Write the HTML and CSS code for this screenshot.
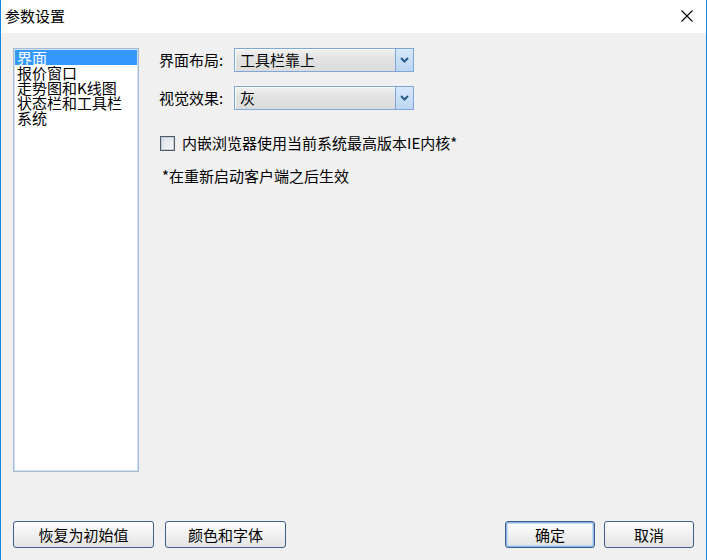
FILE: index.html
```html
<!DOCTYPE html>
<html lang="zh-CN">
<head>
<meta charset="utf-8">
<title>参数设置</title>
<link rel="stylesheet" href="styles.css">
</head>
<body>
<div class="window">
  <div class="titlebar">
    <span class="title">参数设置</span>
    <span class="close">
      <svg width="12" height="12" viewBox="0 0 12 12"><path d="M0.5 0.5 L11.5 11.5 M11.5 0.5 L0.5 11.5" stroke="#000" stroke-width="1.1" fill="none"/></svg>
    </span>
  </div>
  <div class="content">
    <div class="main">
      <ul class="listbox">
        <li class="item selected">界面</li>
        <li class="item">报价窗口</li>
        <li class="item">走势图和K线图</li>
        <li class="item">状态栏和工具栏</li>
        <li class="item">系统</li>
      </ul>
      <div class="panel">
        <div class="row">
          <span class="label">界面布局:</span>
          <div class="combo">
            <span class="combo-text">工具栏靠上</span>
            <span class="combo-btn"><svg width="9" height="6" viewBox="0 0 9 6"><path d="M1 1 L4.5 4.5 L8 1" stroke="#2b5a8c" stroke-width="2" fill="none"/></svg></span>
          </div>
        </div>
        <div class="row">
          <span class="label">视觉效果:</span>
          <div class="combo">
            <span class="combo-text">灰</span>
            <span class="combo-btn"><svg width="9" height="6" viewBox="0 0 9 6"><path d="M1 1 L4.5 4.5 L8 1" stroke="#2b5a8c" stroke-width="2" fill="none"/></svg></span>
          </div>
        </div>
        <label class="check-row">
          <span class="checkbox"></span>
          <span class="check-text">内嵌浏览器使用当前系统最高版本IE内核*</span>
        </label>
        <div class="note">*在重新启动客户端之后生效</div>
      </div>
    </div>
    <div class="footer">
      <div class="group left">
        <button class="btn w141">恢复为初始值</button>
        <button class="btn w121">颜色和字体</button>
      </div>
      <div class="group right">
        <button class="btn w90 default">确定</button>
        <button class="btn w90">取消</button>
      </div>
    </div>
  </div>
</div>
</body>
</html>
```
FILE: styles.css
```css
* { box-sizing: border-box; }
html, body {
  margin: 0;
  padding: 0;
  width: 707px;
  height: 560px;
  overflow: hidden;
  font-family: "Noto Sans CJK SC", "Liberation Sans", sans-serif;
  font-size: 15px;
  color: #000;
}
.window {
  width: 707px;
  height: 560px;
  border-left: 1px solid #1883d7;
  border-right: 1px solid #1883d7;
  display: flex;
  flex-direction: column;
  background: #f0f0f0;
}
.titlebar {
  height: 33px;
  background: #fff;
  display: flex;
  align-items: center;
  justify-content: space-between;
  padding: 0 13px 1px 4px;
}
.title {
  font-size: 15px;
  line-height: 16px;
}
.close {
  display: flex;
  width: 12px;
  height: 12px;
}
.content {
  flex: 1;
  display: flex;
  flex-direction: column;
  padding: 15px 12px 12px 12px;
}
.main {
  display: flex;
  align-items: flex-start;
}
.listbox {
  list-style: none;
  margin: 0;
  padding: 1px;
  width: 126px;
  height: 424px;
  background: #fff;
  border: 1px solid #a4bad5;
  box-shadow: inset 0 0 0 1px #d2dfee;
}
.item {
  height: 15px;
  line-height: 15px;
  padding-left: 2px;
  white-space: nowrap;
  font-size: 15px;
}
.item.selected {
  background: #3399ff;
  color: #fff;
}
.panel {
  margin-left: 19px;
  display: flex;
  flex-direction: column;
}
.row {
  display: flex;
  align-items: center;
  height: 24px;
  margin-bottom: 14px;
}
.label {
  width: 76px;
  line-height: 16px;
  padding-left: 1px;
}
.combo {
  width: 180px;
  height: 24px;
  border: 1px solid #7ea7d6;
  display: flex;
  background: linear-gradient(#f2f2f2, #e3e3e3 40%, #dcdcdc);
  box-shadow: inset 1px 1px 0 #fff;
}
.combo-text {
  flex: 1;
  padding-left: 5px;
  line-height: 22px;
}
.combo-btn {
  width: 18px;
  border-left: 1px solid #7ea7d6;
  background: linear-gradient(#d6e8fb, #bcd6f3);
  display: flex;
  align-items: center;
  justify-content: center;
}
.check-row {
  display: flex;
  align-items: center;
  margin-top: 11px;
  margin-left: 2px;
  height: 16px;
}
.checkbox {
  width: 15px;
  height: 15px;
  border: 1px solid #4f5b68;
  background: linear-gradient(135deg, #d8dde4, #f8f8f8);
  box-shadow: inset 0 0 0 1px #c4cbd3;
}
.check-text {
  margin-left: 7px;
  line-height: 16px;
}
.note {
  margin-top: 17px;
  margin-left: 4px;
  line-height: 16px;
}
.footer {
  margin-top: auto;
  display: flex;
  justify-content: space-between;
}
.group {
  display: flex;
}
.group.left { gap: 11px; }
.group.right { gap: 9px; }
.btn {
  height: 27px;
  font-family: "Noto Sans CJK SC", "Liberation Sans", sans-serif;
  font-size: 15px;
  line-height: 16px;
  color: #000;
  border: 1px solid #3d5f8a;
  border-radius: 3px;
  background: linear-gradient(#fdfdfd, #f0f0f0 50%, #e3e3e3);
  padding: 0;
  margin: 0;
}
.btn.default {
  box-shadow: inset 0 0 0 1px #8ab4ea, inset 0 0 0 2px #c3dbf7;
}
.w141 { width: 141px; }
.w121 { width: 121px; }
.w90 { width: 90px; }
```
